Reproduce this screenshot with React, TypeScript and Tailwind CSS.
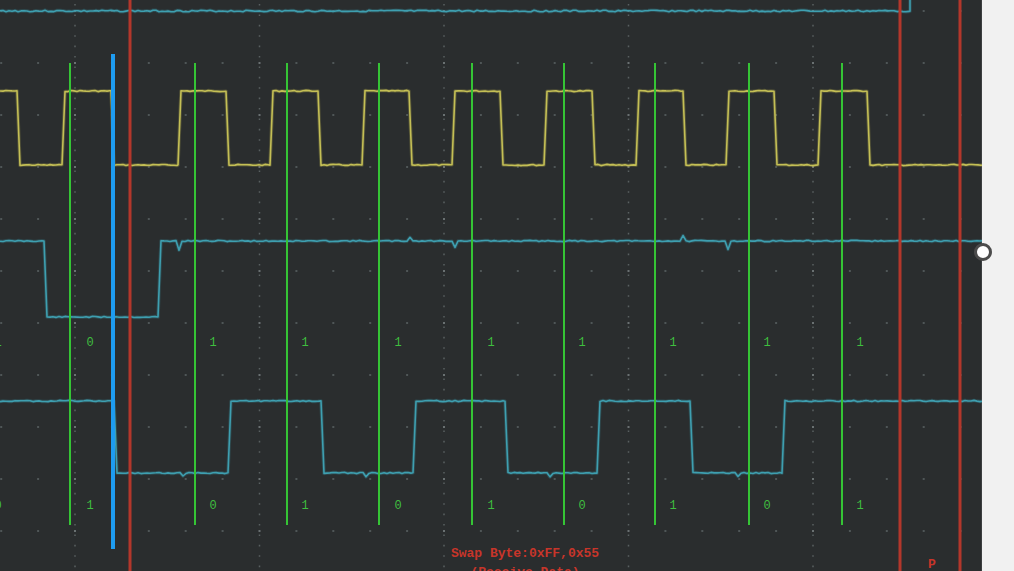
import React from 'react';

type Glitch = { x: number; dy: number };

// builds a noisy square-wave path, levels alternate between hi and lo
function trace(
  hi: number,
  lo: number,
  startHigh: boolean,
  edges: number[],
  end: number,
  seed: number,
  glitches: Glitch[] = [],
  amp = 0.6,
  edge = 3
) {
  let s = seed;
  const rnd = () => {
    s = (s * 9301 + 49297) % 233280;
    return s / 233280 - 0.5;
  };
  const pts: [number, number][] = [];
  const bounds = [...edges, end];
  bounds.forEach((stop, i) => {
    const high = i % 2 === 0 ? startHigh : !startHigh;
    const y = high ? hi : lo;
    const start = i === 0 ? 0 : bounds[i - 1] + edge;
    for (let x = start; x < stop; x += 3) {
      const g = glitches.find((gl) => Math.abs(gl.x - x) < 1.6);
      pts.push([x, y + rnd() * amp * 2 + (g ? g.dy : 0)]);
    }
    pts.push([stop, y + rnd() * amp]);
  });
  return 'M' + pts.map((p) => `${p[0].toFixed(1)} ${p[1].toFixed(1)}`).join(' L');
}

const greenLines = [70, 195, 287, 379, 472, 564, 655, 749, 842];
const labelX = [90, 213, 305, 398, 491, 582, 673, 767, 860];
const rowA = ['0', '1', '1', '1', '1', '1', '1', '1', '1'];
const rowB = ['1', '0', '1', '0', '1', '0', '1', '0', '1'];

const clockPath = trace(
  91,
  165,
  true,
  [17, 62, 111, 178, 226, 270, 318, 362, 409, 452, 500, 544, 592, 636, 683, 726, 774, 818, 867],
  982,
  7
);
const topPath = trace(11, 11, true, [], 910, 3, [], 0.8) + ' L910 0';
const dataPath = trace(241, 317, true, [44, 158], 982, 11, [
  { x: 179, dy: 9 },
  { x: 410, dy: -4 },
  { x: 455, dy: 6 },
  { x: 683, dy: -5 },
  { x: 728, dy: 8 },
]);
const swapPath = trace(401, 473, true, [114, 228, 321, 413, 505, 597, 690, 782], 982, 19, [
  { x: 183, dy: 3 },
  { x: 366, dy: 4 },
  { x: 549, dy: 4 },
  { x: 738, dy: 3 },
]);

const cols = Array.from({ length: 28 }, (_, i) => i - 2);
const rows = Array.from({ length: 11 }, (_, j) => 11 + j * 52);

const Scope = () => (
  <svg width={982} height={571} className="block">
    {/* grid */}
    {cols
      .filter((k) => k % 5 === 0)
      .map((k) => {
        const x = 75 + k * 36.9;
        return (
          <line
            key={`maj${k}`}
            x1={x}
            y1={0}
            x2={x}
            y2={571}
            stroke="#596061"
            strokeWidth={1.5}
            strokeDasharray="1.6 8.8"
            strokeDashoffset={-4}
          />
        );
      })}
    {cols.map((k) =>
      rows.map((y) => (
        <rect
          key={`d${k}-${y}`}
          x={75 + k * 36.9 - 1}
          y={y - 1}
          width={2}
          height={2}
          fill={k % 5 === 0 ? '#6a7172' : '#4f5657'}
        />
      ))
    )}

    {/* traces */}
    <g fill="none" strokeLinejoin="round">
      <path d={topPath} stroke="#3a9cad" strokeWidth={3.5} opacity={0.25} />
      <path d={topPath} stroke="#3e9fb0" strokeWidth={1.6} />
      <path d={clockPath} stroke="#c2bd52" strokeWidth={3.5} opacity={0.25} />
      <path d={clockPath} stroke="#c4bf55" strokeWidth={1.6} />
      <path d={dataPath} stroke="#3a9cad" strokeWidth={3.5} opacity={0.25} />
      <path d={dataPath} stroke="#3e9fb0" strokeWidth={1.6} />
      <path d={swapPath} stroke="#3a9cad" strokeWidth={3.5} opacity={0.25} />
      <path d={swapPath} stroke="#3e9fb0" strokeWidth={1.6} />
    </g>

    {/* sample markers */}
    {greenLines.map((x) => (
      <line key={x} x1={x} y1={63} x2={x} y2={525} stroke="#35c435" strokeWidth={2} />
    ))}

    {/* bit values */}
    <g fill="#3fbf3f" fontFamily='"Liberation Mono", monospace' fontSize={12} textAnchor="middle">
      <text x={-2} y={346}>1</text>
      <text x={-2} y={509}>0</text>
      {labelX.map((x, i) => (
        <React.Fragment key={x}>
          <text x={x} y={346}>{rowA[i]}</text>
          <text x={x} y={509}>{rowB[i]}</text>
        </React.Fragment>
      ))}
    </g>

    {/* frame boundaries */}
    {[130, 900, 960].map((x) => (
      <line key={x} x1={x} y1={0} x2={x} y2={571} stroke="#b3372b" strokeWidth={3} />
    ))}

    <rect x={111} y={54} width={4} height={495} fill="#1e9cf0" />

    <g fill="#c8352a" fontFamily='"Liberation Mono", monospace' fontSize={13} fontWeight={700} textAnchor="middle">
      <text x={525} y={557}>Swap Byte:0xFF,0x55</text>
      <text x={525} y={576}>(Receive Data)</text>
      <text x={932} y={568}>P</text>
    </g>
  </svg>
);

export default function App() {
  return (
    <div className="relative flex w-[1014px] h-[571px] overflow-hidden">
      <div className="w-[982px] h-full bg-[#2a2d2e] border-r border-[#3c3f40]">
        <Scope />
      </div>
      <div className="flex-1 bg-[#f1f1f1]" />
      <div className="absolute left-[974px] top-[243px] w-[18px] h-[18px] rounded-full bg-white border-[3px] border-[#4b4b4b]" />
    </div>
  );
}
